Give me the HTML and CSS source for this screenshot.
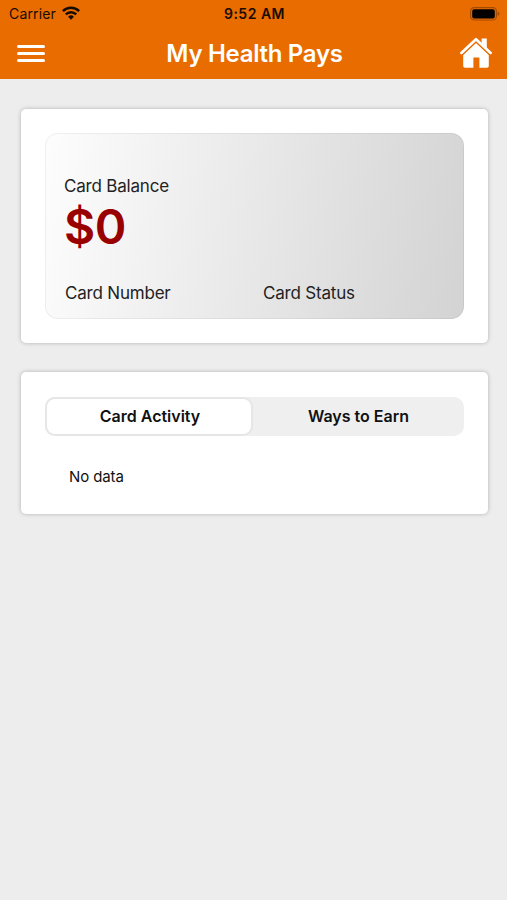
FILE: index.html
```html
<!DOCTYPE html>
<html lang="en">
<head>
    <meta charset="UTF-8">
    <meta name="viewport" content="width=device-width, initial-scale=1.0">
    <title>My Health Pays</title>
    <link rel="stylesheet" href="styles.css">
</head>
<body>
    <header class="header">
        <!-- Status bar -->
        <div class="status-bar">
            <div class="carrier">
                <span>Carrier</span>
                <svg class="wifi" width="18" height="14" viewBox="0 0 18 14" fill="none" stroke="#180b00" stroke-width="2.4">
                    <path d="M.9 5.2a11.4 11.4 0 0 1 16.2 0"/>
                    <path d="M3.8 8.4a7.3 7.3 0 0 1 10.4 0"/>
                    <path d="M9 13.8 6.1 10.8a4.1 4.1 0 0 1 5.8 0z" fill="#180b00" stroke="none"/>
                </svg>
            </div>
            <span class="time">9:52 AM</span>
            <svg class="battery" width="30" height="14" viewBox="0 0 30 14">
                <rect x="0.6" y="0.6" width="25.8" height="12.4" rx="3.6" fill="none" stroke="#a54b00" stroke-width="1.2"/>
                <rect x="2.2" y="2.2" width="22.6" height="9.2" rx="2" fill="#000"/>
                <path d="M27.6 4.6q2 .8 2 2.2t-2 2.2z" fill="#a54b00"/>
            </svg>
        </div>

        <!-- Title bar -->
        <div class="nav-bar">
            <button class="menu-btn" aria-label="Menu">
                <span></span>
                <span></span>
                <span></span>
            </button>
            <h1>My Health Pays</h1>
            <button class="home-btn" aria-label="Home">
                <svg width="32" height="32" viewBox="0 0 32 32">
                    <path d="M21.6 1.6h5.2v11l-5.2-5z" fill="#fff"/>
                    <path d="M3.2 17.2 16 5.4l12.8 11.8V29q0 1.8-1.8 1.8h-7.6V20.6h-6v10.2H5q-1.8 0-1.8-1.8z" fill="#fff"/>
                    <path d="M2.2 17.8 16 5l13.8 12.8" fill="none" stroke="#e86c00" stroke-width="1.6"/>
                    <path d="M1.4 15.9 16 2.2l14.6 13.7" fill="none" stroke="#fff" stroke-width="2.7" stroke-linecap="round" stroke-linejoin="round"/>
                </svg>
            </button>
        </div>
    </header>

    <main class="content">
        <!-- Balance -->
        <section class="panel">
            <div class="pay-card">
                <div class="label">Card Balance</div>
                <div class="balance">$0</div>
                <div class="card-info">
                    <div class="label">Card Number</div>
                    <div class="label">Card Status</div>
                </div>
            </div>
        </section>

        <!-- Activity -->
        <section class="panel">
            <div class="tabs">
                <button class="tab active">Card Activity</button>
                <button class="tab">Ways to Earn</button>
            </div>
            <p class="empty">No data</p>
        </section>
    </main>
</body>
</html>
```
FILE: styles.css
```css
:root {
    --primary-color: #e86c00;
    --bg-color: #ededed;
    --balance-color: #990000;
}

* {
    margin: 0;
    padding: 0;
    box-sizing: border-box;
    font-family: Inter, "Liberation Sans", sans-serif;
}

body {
    min-height: 100vh;
    background: var(--bg-color);
    color: #111;
}

button {
    border: none;
    background: none;
}

/* Header */
.header {
    height: 79px;
    background: var(--primary-color);
}

.status-bar {
    display: grid;
    grid-template-columns: 1fr auto 1fr;
    align-items: center;
    height: 27px;
    padding: 0 7px 0 9px;
    color: #180b00;
    font-size: 14px;
}

.carrier {
    display: flex;
    align-items: center;
    gap: 6px;
    letter-spacing: 0.15px;
}

.wifi {
    margin-top: -2px;
}

.time {
    font-weight: 600;
    letter-spacing: 0.5px;
}

.battery {
    justify-self: end;
}

.nav-bar {
    display: grid;
    grid-template-columns: 1fr auto 1fr;
    align-items: center;
    height: 52px;
    padding: 0 15px 0 17px;
}

.nav-bar h1 {
    color: white;
    font-size: 24px;
    font-weight: 600;
    letter-spacing: -0.3px;
}

.menu-btn {
    display: flex;
    flex-direction: column;
    gap: 4px;
    width: 28px;
}

.menu-btn span {
    height: 3px;
    border-radius: 2px;
    background: white;
}

.home-btn {
    justify-self: end;
    height: 32px;
}

/* Panels */
.content {
    display: flex;
    flex-direction: column;
    gap: 29px;
    padding: 30px 19px 0 21px;
}

.panel {
    padding: 24px;
    background: white;
    border-radius: 5px;
    box-shadow: 0 0 4px rgba(0, 0, 0, 0.25);
}

.pay-card {
    height: 186px;
    padding: 41px 18px 0;
    border: 1px solid rgba(0, 0, 0, 0.05);
    border-radius: 13px;
    background: linear-gradient(100deg, #fdfdfd 0%, #d3d3d3 100%) border-box;
}

.label {
    font-size: 17px;
    line-height: 22px;
    letter-spacing: -0.2px;
    color: #222;
}

.balance {
    color: var(--balance-color);
    font-size: 48px;
    font-weight: 600;
    line-height: 60px;
    letter-spacing: -0.5px;
}

.card-info {
    display: grid;
    grid-template-columns: 198px 1fr;
    margin: 25px 0 0 1px;
}

/* Tabs */
.tabs {
    display: grid;
    grid-template-columns: 208px 1fr;
    height: 39px;
    margin-top: 1px;
    border-radius: 10px;
    background: #efefef;
}

.tab {
    padding-bottom: 1px;
    color: #111;
    font-size: 16px;
    font-weight: 600;
}

.tab.active {
    padding-left: 2px;
    border: 2px solid #e6e6e6;
    border-radius: 10px;
    background: white;
}

.empty {
    padding: 32px 24px 4px;
    font-size: 15px;
    line-height: 18px;
    letter-spacing: -0.1px;
}
```
